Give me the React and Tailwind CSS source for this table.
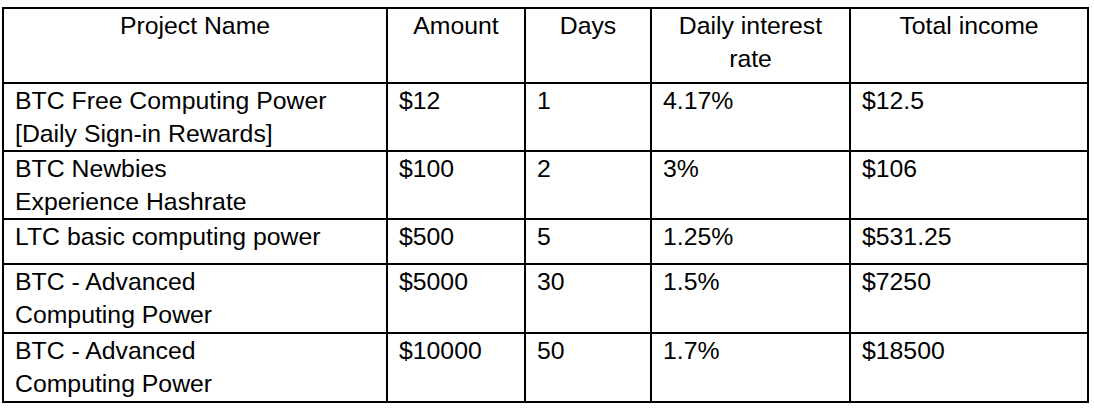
import React from 'react';

const rows = [
  { name: ['BTC Free Computing Power', '[Daily Sign-in Rewards]'], amount: '$12', days: '1', rate: '4.17%', total: '$12.5', h: 'h-[68px]' },
  { name: ['BTC Newbies', 'Experience Hashrate'], amount: '$100', days: '2', rate: '3%', total: '$106', h: 'h-[68px]' },
  { name: ['LTC basic computing power'], amount: '$500', days: '5', rate: '1.25%', total: '$531.25', h: 'h-[45px]' },
  { name: ['BTC - Advanced', 'Computing Power'], amount: '$5000', days: '30', rate: '1.5%', total: '$7250', h: 'h-[69px]' },
  { name: ['BTC - Advanced', 'Computing Power'], amount: '$10000', days: '50', rate: '1.7%', total: '$18500', h: 'h-[69px]' },
];

const headers = ['Project Name', 'Amount', 'Days', 'Daily interest rate', 'Total income'];

const Cell = ({ children }) => (
  <td className="border-2 border-black align-top text-left pl-[11px] pr-[12px] pt-0">
    {children}
  </td>
);

export default function App() {
  return (
    <div
      className="w-[1094px] h-[414px] bg-white pt-[7px] pl-[2px] text-black text-[24.8px] leading-[33px]"
      style={{ fontFamily: '"Liberation Sans", Arial, sans-serif' }}
    >
      <table className="border-collapse table-fixed w-[1085px]">
        <colgroup>
          <col className="w-[384px]" />
          <col className="w-[138px]" />
          <col className="w-[126px]" />
          <col className="w-[199px]" />
          <col className="w-[238px]" />
        </colgroup>
        <thead>
          <tr className="h-[75px]">
            {headers.map((h) => (
              <th
                key={h}
                className="border-2 border-black font-normal text-center align-top px-[12px] pt-0"
              >
                {h}
              </th>
            ))}
          </tr>
        </thead>
        <tbody>
          {rows.map((r, i) => (
            <tr key={i} className={r.h}>
              <Cell>
                {r.name.map((line, k) => (
                  <div key={k}>{line}</div>
                ))}
              </Cell>
              <Cell>{r.amount}</Cell>
              <Cell>{r.days}</Cell>
              <Cell>{r.rate}</Cell>
              <Cell>{r.total}</Cell>
            </tr>
          ))}
        </tbody>
      </table>
    </div>
  );
}
